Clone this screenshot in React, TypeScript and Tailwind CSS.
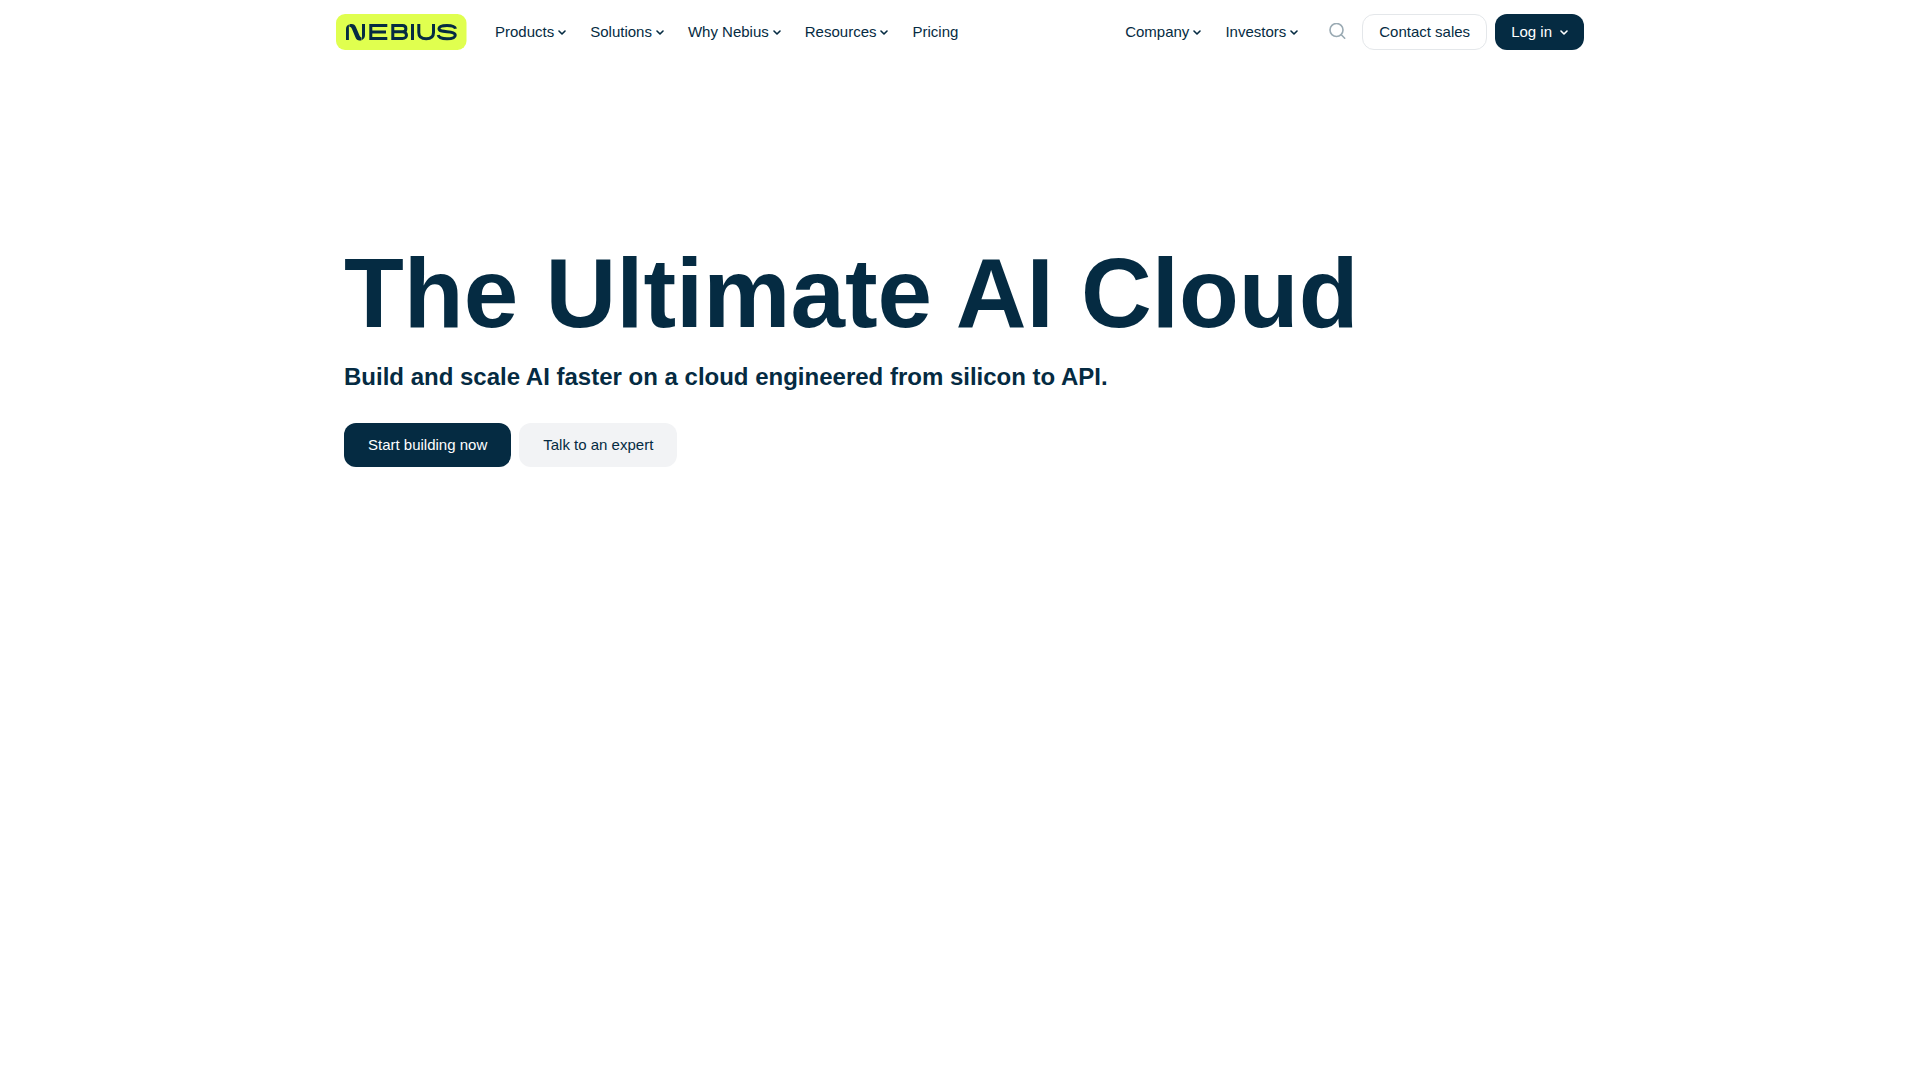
import React from "react";

const leftMenu = ["Products", "Solutions", "Why Nebius", "Resources"];
const rightMenu = ["Company", "Investors"];

function Chevron() {
  return (
    <svg width="8" height="8" viewBox="0 0 8 8" fill="none" stroke="currentColor" strokeWidth="1.6" strokeLinecap="round" strokeLinejoin="round" className="mt-0.5" aria-hidden="true">
      <path d="M1 2l3 3 3-3" />
    </svg>
  );
}

function MenuButton({ label }: { label: string }) {
  return (
    <button type="button" className="flex items-center gap-1 whitespace-nowrap">
      {label}
      <Chevron />
    </button>
  );
}

function Logo() {
  return (
    <svg width="131" height="36" viewBox="0 0 131 36" fill="none" stroke="#052b42" strokeWidth="3" role="img" aria-label="Nebius">
      <rect width="130.5" height="36" rx="9" fill="#e0ff4f" stroke="none" />
      {/* N */}
      <g fill="#052b42" stroke="none">
        <path d="M10 26V15C10 13 11 11.3 12.9 10.6V26Z" />
        <path d="M13.3 10.4C14 10.1 14.8 10 15.6 10C17.9 10 19 11 20 13.2L23.5 21.5C24 22.6 24.6 23.3 25.6 23.5V26.2C25 26.4 24.3 26.5 23.6 26.5C21.5 26.5 20.3 25.3 19.4 23.2L16 15C15.3 13.4 14.7 12.8 13.3 12.7Z" />
        <path d="M26 25.9C28 25 29 23.2 29 21V10H26Z" />
      </g>
      {/* E */}
      <path d="M51.3 11.5H34.8V24.5H51.3M34.8 18H50" />
      {/* B */}
      <path d="M56.8 11.5H66.5C71 11.5 71 17.8 66.5 17.8H56.8M66.5 17.8C71.8 17.8 71.8 24.5 66.5 24.5H56.8M56.8 10V26" />
      {/* I */}
      <path d="M76.5 10V26" />
      {/* U */}
      <path d="M82.8 10V18.5C82.8 22.8 85.5 24.8 90.2 24.8S97.5 22.8 97.5 18.5V10" />
      {/* S */}
      <path d="M119.5 14.8C119 12.5 116.5 11.4 111 11.4C105.5 11.4 103 12.4 103 14.6C103 17 105.5 17.3 111 17.8C116.5 18.3 119.2 18.8 119.2 21.2C119.2 23.6 116.5 24.7 111 24.7C105.3 24.7 102.6 23.4 102.2 21" />
    </svg>
  );
}

export default function App() {
  return (
    <div className="min-h-screen bg-white text-[#052b42] font-['Liberation_Sans',Arial,sans-serif] text-[15px] leading-5">
      <header className="mx-auto flex h-16 max-w-[1248px] items-center">
        <a href="#" className="mr-7 shrink-0">
          <Logo />
        </a>
        <nav aria-label="Main" className="flex items-center gap-6">
          {leftMenu.map((label) => (
            <MenuButton key={label} label={label} />
          ))}
          <a href="#">Pricing</a>
        </nav>

        <nav aria-label="Company" className="ml-auto flex items-center gap-6">
          {rightMenu.map((label) => (
            <MenuButton key={label} label={label} />
          ))}
        </nav>
        <button type="button" aria-label="Search" className="ml-6 mr-2 flex size-8 items-center justify-center text-[#9aaab3]">
          <svg width="18" height="18" viewBox="0 0 18 18" fill="none" stroke="currentColor" strokeWidth="1.6" strokeLinecap="round" aria-hidden="true">
            <circle cx="7.5" cy="7" r="6.5" />
            <path d="M12.3 11.8l3.4 3.4" />
          </svg>
        </button>
        <a href="#" className="flex h-9 items-center whitespace-nowrap rounded-xl border border-[#e4e7ea] px-4">
          Contact sales
        </a>
        <button type="button" className="ml-2 flex h-9 items-center gap-2 whitespace-nowrap rounded-xl bg-[#052b42] px-4 text-white">
          Log in
          <Chevron />
        </button>
      </header>

      <main className="mx-auto max-w-[1232px] pt-[177px]">
        <h1 className="text-[98px] leading-[104px] font-bold">The Ultimate AI Cloud</h1>
        <p className="mt-4 text-2xl leading-8 font-bold">
          Build and scale AI faster on a cloud engineered from silicon to API.
        </p>
        <div className="mt-[30px] flex gap-2">
          <a href="#" className="flex h-11 items-center rounded-xl bg-[#052b42] px-6 text-white">
            Start building now
          </a>
          <a href="#" className="flex h-11 items-center rounded-xl bg-[#f2f3f5] px-6">
            Talk to an expert
          </a>
        </div>
      </main>
    </div>
  );
}
